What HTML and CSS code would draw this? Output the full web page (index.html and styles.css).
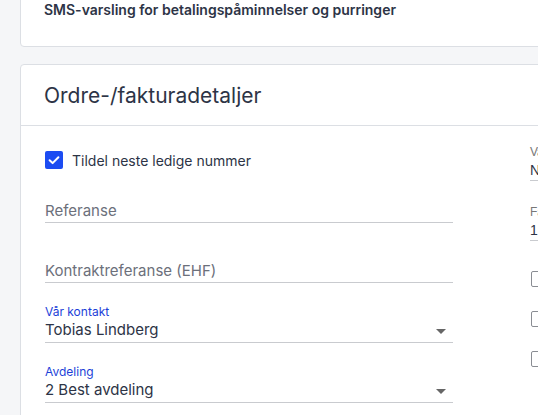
FILE: index.html
```html
<!DOCTYPE html>
<html lang="no">
<head>
<meta charset="utf-8">
<title>Ordre-/fakturadetaljer</title>
<link rel="stylesheet" href="styles.css">
</head>
<body>
<main class="page">
  <section class="card card-sms">
    <p class="sms-title">SMS-varsling for betalingspåminnelser og purringer</p>
  </section>

  <section class="card card-order">
    <header class="card-header">
      <h2 class="card-title">Ordre-/fakturadetaljer</h2>
    </header>
    <div class="card-body">
      <div class="col col-left">
        <label class="check-row">
          <span class="checkbox checked">
            <svg viewBox="0 0 18 18" width="18" height="18"><path d="M4.6 9.3 L7.6 12.1 L13.4 6.2" fill="none" stroke="#fff" stroke-width="2" stroke-linecap="round" stroke-linejoin="round"/></svg>
          </span>
          <span class="check-text">Tildel neste ledige nummer</span>
        </label>

        <div class="field">
          <span class="field-label"></span>
          <span class="field-value placeholder">Referanse</span>
        </div>

        <div class="field">
          <span class="field-label"></span>
          <span class="field-value placeholder">Kontraktreferanse (EHF)</span>
        </div>

        <div class="field">
          <span class="field-label">Vår kontakt</span>
          <span class="field-value select">Tobias Lindberg<span class="caret"></span></span>
        </div>

        <div class="field">
          <span class="field-label">Avdeling</span>
          <span class="field-value select">2 Best avdeling<span class="caret"></span></span>
        </div>
      </div>

      <div class="col col-right">
        <div class="rfield">
          <span class="rfield-label">Valuta</span>
          <span class="rfield-value">NOK</span>
        </div>
        <div class="rfield">
          <span class="rfield-label">Fakturadato</span>
          <span class="rfield-value">12.03.2024</span>
        </div>
        <div class="rchecks">
          <span class="rcheck"></span>
          <span class="rcheck"></span>
          <span class="rcheck"></span>
        </div>
      </div>
    </div>
  </section>
</main>
</body>
</html>
```

FILE: styles.css
```css
html, body {
  margin: 0;
  padding: 0;
  overflow: hidden;
  background: #f5f6f8;
}

body {
  font-family: Inter, "Noto Sans", "Liberation Sans", sans-serif;
  color: #2d3446;
}

.page {
  width: 900px;
  padding-left: 20px;
}

.card {
  background: #fff;
  border: 1px solid #dcdfe4;
  border-radius: 4px;
}

.card-sms {
  margin-top: -25px;
  padding: 24px 23px 26px;
}

.sms-title {
  margin: 0;
  font-size: 14px;
  line-height: 20px;
  font-weight: 600;
  color: #2d3446;
}

.card-order {
  margin-top: 17px;
}

.card-header {
  height: 60px;
  display: flex;
  align-items: center;
  padding: 0 23px;
  border-bottom: 1px solid #dcdfe4;
}

.card-title {
  margin: 0;
  font-size: 21px;
  font-weight: 400;
  color: #2d3446;
}

.card-body {
  display: grid;
  grid-template-columns: 408px 1fr;
  column-gap: 77px;
  padding: 0 24px 40px;
}

.col-left {
  padding-top: 24px;
  display: flex;
  flex-direction: column;
  gap: 20px;
}

.check-row {
  display: flex;
  align-items: center;
  gap: 9px;
  height: 20px;
  margin-bottom: -7px;
}

.checkbox {
  width: 18px;
  height: 18px;
  border-radius: 2px;
  display: flex;
  align-items: center;
  justify-content: center;
}

.checkbox.checked {
  background: #1c4cf2;
}

.check-text {
  font-size: 14px;
  color: #2d3446;
}

.field {
  display: flex;
  flex-direction: column;
  border-bottom: 1px solid #c9cbcf;
}

.field-label {
  height: 17px;
  line-height: 17px;
  font-size: 12px;
  color: #1d3fd8;
}

.field-value {
  display: flex;
  align-items: center;
  height: 20px;
  line-height: 20px;
  font-size: 15px;
  padding-bottom: 2px;
  color: #2d3446;
}

.field-value.placeholder {
  color: #6c707b;
  height: 19px;
  padding-top: 1px;
}

.field-value.select {
  justify-content: space-between;
}

.caret {
  width: 0;
  height: 0;
  border-left: 5px solid transparent;
  border-right: 5px solid transparent;
  border-top: 5px solid #666;
  margin-right: 7px;
  margin-top: 3px;
}

.col-right {
  padding-top: 19px;
  display: flex;
  flex-direction: column;
  font-family: "Liberation Sans", Arial, sans-serif;
}

.rfield {
  display: flex;
  flex-direction: column;
  border-bottom: 1px solid #c9cbcf;
  margin-bottom: 24px;
  width: 120px;
}

.rfield-label {
  height: 15px;
  line-height: 15px;
  font-size: 12px;
  color: #777;
}

.rfield-value {
  height: 20px;
  line-height: 20px;
  font-size: 14px;
  color: #2d3446;
}

.rchecks {
  display: flex;
  flex-direction: column;
  gap: 24px;
  padding-top: 6px;
  padding-left: 1px;
}

.rcheck {
  width: 14px;
  height: 14px;
  border: 1px solid #8a8d93;
  border-radius: 2px;
  background: #fff;
}
```
